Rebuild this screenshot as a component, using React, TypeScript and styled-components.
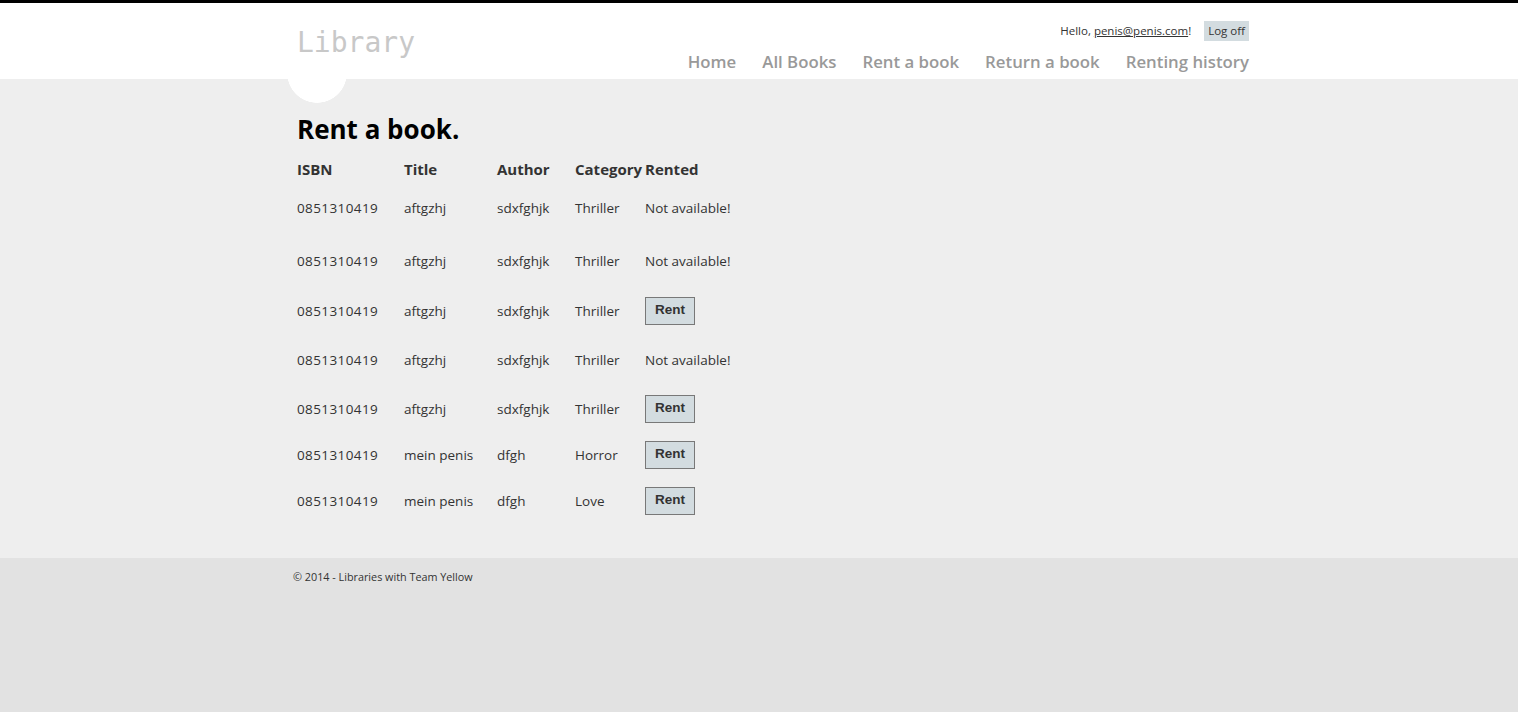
import React from "react";
import styled, { createGlobalStyle } from "styled-components";

const GlobalStyle = createGlobalStyle`
  html {
    background-color: #e2e2e2;
    margin: 0;
    padding: 0;
  }
  body {
    margin: 0;
    padding: 0;
    background-color: #fff;
    border-top: 3px solid #000;
    color: #333;
    font-family: "Open Sans", "Noto Sans", sans-serif;
    font-size: 13.6px;
  }
`;

const Wrapper = styled.div`
  width: 960px;
  padding-left: 20px;
  margin: 0 auto;
`;

const Header = styled.header`
  background: #fff;
  height: 76px;
  box-sizing: border-box;
  padding-top: 18px;
`;

const HeaderInner = styled(Wrapper)`
  display: flex;
  justify-content: space-between;
  align-items: flex-start;
`;

const SiteTitle = styled.a`
  margin: 5px 0 0 8px;
  color: #c8c8c8;
  font-family: "DejaVu Sans Mono", "Liberation Mono", monospace;
  font-size: 28px;
  line-height: 34px;
  text-decoration: none;
`;

const RightCol = styled.div`
  display: flex;
  flex-direction: column;
  align-items: flex-end;
`;

const Login = styled.section`
  font-size: 11.5px;
  line-height: 20px;
  color: #333;
  display: flex;
  align-items: center;
`;

const UserLink = styled.a`
  color: #333;
  text-decoration: underline;
`;

const LogOff = styled.a`
  background-color: #d3dce0;
  margin-left: 13px;
  padding: 0 4px;
  line-height: 20px;
  color: #333;
  text-decoration: none;
`;

const Menu = styled.ul`
  display: flex;
  gap: 26px;
  margin: 9px 0 0;
  padding: 0;
  list-style: none;
  font-size: 16.8px;
  font-weight: 600;
  line-height: 24px;
`;

const MenuLink = styled.a`
  color: #999;
  text-decoration: none;
`;

const Main = styled.div`
  background-color: #eeeeee;
  padding-top: 34px;
  padding-bottom: 34px;
`;

const MainContent = styled(Wrapper)`
  box-sizing: content-box;
  background: radial-gradient(circle 30px at 48px -6px, #fff 29.5px, transparent 30px) no-repeat;
  margin-top: -34px;
  padding-top: 34px;
`;

const Inner = styled.div`
  padding-left: 8px;
`;

const Heading = styled.h2`
  margin: 0 0 11px;
  color: #000;
  font-size: 26px;
  font-weight: 700;
  line-height: 32px;
`;

const Grid = styled.div`
  display: grid;
  grid-template-columns: 107px 93px 78px 70px auto;
`;

const Row = styled.div<{ $h: number }>`
  display: contents;
  & > * {
    height: ${(p) => p.$h}px;
  }
`;

const HeadCell = styled.div`
  display: flex;
  align-items: center;
  font-weight: 700;
  font-size: 15px;
  color: #333;
  white-space: nowrap;
`;

const Cell = styled.div`
  display: flex;
  align-items: center;
  font-size: 13.5px;
  color: #333;
  white-space: nowrap;
`;

const Isbn = styled.span`
  letter-spacing: 0.4px;
`;

const RentButton = styled.button`
  width: 50px;
  height: 28px;
  background-color: #d3dce0;
  border: 1px solid #787878;
  font-family: "Liberation Sans", Arial, sans-serif;
  font-weight: 700;
  font-size: 13.5px;
  color: #333;
  padding: 0 0 3px;
  cursor: pointer;
`;

const Footer = styled.footer`
  background-color: #e2e2e2;
  height: 100px;
  padding-top: 12px;
  box-sizing: border-box;
  font-size: 10.8px;
  color: #333;
`;

const FooterText = styled.p`
  margin: 0 0 0 4px;
  line-height: 14px;
`;

type Book = {
  isbn: string;
  title: string;
  author: string;
  category: string;
  available: boolean;
  h: number;
};

const books: Book[] = [
  { isbn: "0851310419", title: "aftgzhj", author: "sdxfghjk", category: "Thriller", available: false, h: 52 },
  { isbn: "0851310419", title: "aftgzhj", author: "sdxfghjk", category: "Thriller", available: false, h: 54 },
  { isbn: "0851310419", title: "aftgzhj", author: "sdxfghjk", category: "Thriller", available: true, h: 46 },
  { isbn: "0851310419", title: "aftgzhj", author: "sdxfghjk", category: "Thriller", available: false, h: 52 },
  { isbn: "0851310419", title: "aftgzhj", author: "sdxfghjk", category: "Thriller", available: true, h: 46 },
  { isbn: "0851310419", title: "mein penis", author: "dfgh", category: "Horror", available: true, h: 46 },
  { isbn: "0851310419", title: "mein penis", author: "dfgh", category: "Love", available: true, h: 46 },
];

const menuItems = ["Home", "All Books", "Rent a book", "Return a book", "Renting history"];

export default function App() {
  return (
    <>
      <GlobalStyle />
      <Header>
        <HeaderInner>
          <SiteTitle href="#">Library</SiteTitle>
          <RightCol>
            <Login>
              <span>
                Hello, <UserLink href="#">penis@penis.com</UserLink>!
              </span>
              <LogOff href="#">Log off</LogOff>
            </Login>
            <Menu>
              {menuItems.map((m) => (
                <li key={m}>
                  <MenuLink href="#">{m}</MenuLink>
                </li>
              ))}
            </Menu>
          </RightCol>
        </HeaderInner>
      </Header>
      <Main>
        <MainContent>
          <Inner>
            <Heading>Rent a book.</Heading>
            <Grid>
              <Row $h={26}>
                <HeadCell>ISBN</HeadCell>
                <HeadCell>Title</HeadCell>
                <HeadCell>Author</HeadCell>
                <HeadCell>Category</HeadCell>
                <HeadCell>Rented</HeadCell>
              </Row>
              {books.map((b, i) => (
                <Row $h={b.h} key={i}>
                  <Cell>
                    <Isbn>{b.isbn}</Isbn>
                  </Cell>
                  <Cell>{b.title}</Cell>
                  <Cell>{b.author}</Cell>
                  <Cell>{b.category}</Cell>
                  <Cell>{b.available ? <RentButton>Rent</RentButton> : "Not available!"}</Cell>
                </Row>
              ))}
            </Grid>
          </Inner>
        </MainContent>
      </Main>
      <Footer>
        <Wrapper>
          <FooterText>© 2014 - Libraries with Team Yellow</FooterText>
        </Wrapper>
      </Footer>
    </>
  );
}
